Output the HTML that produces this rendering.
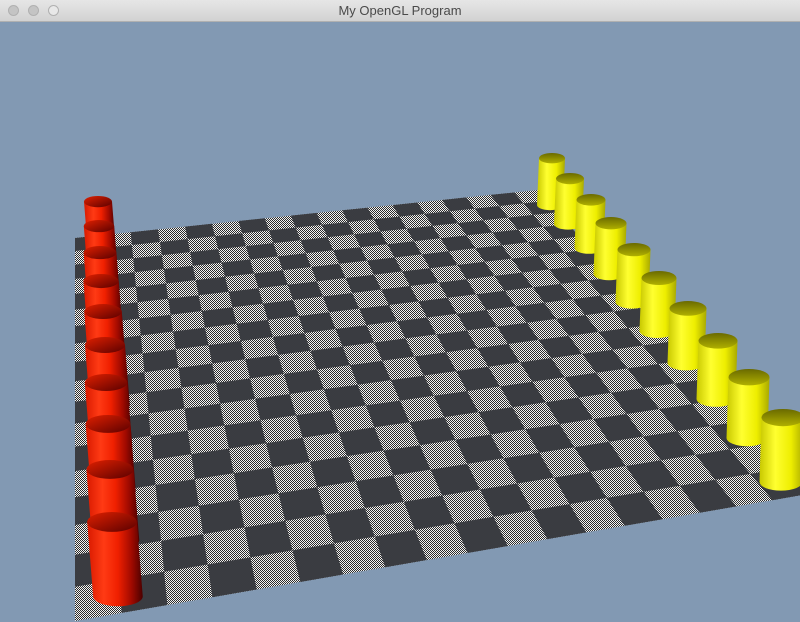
<!DOCTYPE html>
<html><head><meta charset="utf-8"><style>
html,body{margin:0;padding:0;width:800px;height:622px;overflow:hidden;background:#8299b3}
#tb{position:absolute;left:0;top:0;width:800px;height:21px;background:linear-gradient(#e6e6e6,#d2d2d2);border-bottom:1px solid #b0b0b0;font:13px "Liberation Sans",sans-serif;color:#4a4a4a;text-align:center;line-height:21px}
.dot{position:absolute;top:5px;width:11px;height:11px;border-radius:50%;background:#c4c4c4;border:1px solid #b0b0b0;box-sizing:border-box}
svg{position:absolute;left:0;top:0}
</style></head><body>
<svg id="s" width="800" height="622" xmlns="http://www.w3.org/2000/svg">
<defs>
<pattern id="dith" width="2" height="2" patternUnits="userSpaceOnUse"><rect width="2" height="2" fill="#f4f4f4"/><rect width="1" height="1" fill="#2a2a2a"/><rect x="1" y="1" width="1" height="1" fill="#2a2a2a"/></pattern>
<linearGradient id="rg" x1="0" x2="1" y1="0" y2="0"><stop offset="0" stop-color="#d81a00"/><stop offset="0.3" stop-color="#ff3a14"/><stop offset="0.55" stop-color="#f02000"/><stop offset="0.8" stop-color="#a00a00"/><stop offset="1" stop-color="#4a0000"/></linearGradient>
<linearGradient id="rc" x1="0" x2="1" y1="0" y2="1"><stop offset="0" stop-color="#e02000"/><stop offset="1" stop-color="#5a0000"/></linearGradient>
<linearGradient id="yg" x1="0" x2="1" y1="0" y2="0"><stop offset="0" stop-color="#c8c800"/><stop offset="0.35" stop-color="#ffff30"/><stop offset="0.7" stop-color="#eeee00"/><stop offset="1" stop-color="#a8a800"/></linearGradient>
<linearGradient id="yc" x1="0" x2="0" y1="0" y2="1"><stop offset="0" stop-color="#6a6a00"/><stop offset="1" stop-color="#b0b000"/></linearGradient>
</defs>
<g id="board"></g><g id="cyl"></g>
</svg>
<div id="tb"><div class="dot" style="left:8px"></div><div class="dot" style="left:28px"></div><div class="dot" style="left:48px;background:#e8e8e8"></div>My OpenGL Program</div>
<script>
var P=[[75,238],[538,190],[808,494],[75,621]];
var x0=P[0][0],y0=P[0][1],x1=P[1][0],y1=P[1][1],x2=P[2][0],y2=P[2][1],x3=P[3][0],y3=P[3][1];
var dx1=x1-x2,dx2=x3-x2,dy1=y1-y2,dy2=y3-y2,sx=x0-x1+x2-x3,sy=y0-y1+y2-y3;
var den=dx1*dy2-dx2*dy1;
var g=(sx*dy2-dx2*sy)/den,h=(dx1*sy-sx*dy1)/den;
var a=x1-x0+g*x1,b=x3-x0+h*x3,c=x0,d=y1-y0+g*y1,e=y3-y0+h*y3,f=y0;
function m(u,v){var w=g*u+h*v+1;return [(a*u+b*v+c)/w,(d*u+e*v+f)/w];}
var N=18,s='';
s+='<polygon points="'+P.map(function(p){return p.join(',')}).join(' ')+'" fill="url(#dith)"/>';
for(var i=0;i<N;i++)for(var j=0;j<N;j++){if((i+j)%2)continue;
var q=[m(i/N,j/N),m((i+1)/N,j/N),m((i+1)/N,(j+1)/N),m(i/N,(j+1)/N)];
s+='<polygon points="'+q.map(function(p){return p[0].toFixed(1)+','+p[1].toFixed(1)}).join(' ')+'" fill="#3a3c41"/>';}
document.getElementById('board').innerHTML=s;
function cyl(cx,yt,yb,w,dx,body,cap){var r=w/2,ry=w*0.2;
return '<path d="M'+(cx-r)+','+yt+' L'+(cx+dx-r)+','+yb+' A'+r+' '+ry+' 0 0 0 '+(cx+dx+r)+','+yb+' L'+(cx+r)+','+yt+' Z" fill="url(#'+body+')"/>'+
'<ellipse cx="'+cx+'" cy="'+yt+'" rx="'+r+'" ry="'+ry+'" fill="url(#'+cap+')"/>';}
var c2='';
var Y=[[552,153,205,26],[570,173,224,28],[591,194,248,29],[611,217,274,31],[634,243,302,33],[659,271,331,35],[688,301,363,37],[718,333,399,39],[749,369,438,41],[783,409,482,43]];
Y.forEach(function(t){c2+=cyl(t[0],t[1]+t[3]*0.2,t[2],t[3],-2,'yg','yc');});
var R=[[98,196],[99,220],[100,246],[101,274],[103,304],[105,337],[106,374],[108,415],[110,460],[112,512]];
R.forEach(function(t,k){var w=28+k*2.4,hh=w*1.7;c2+=cyl(t[0],t[1]+w*0.2,t[1]+hh,w,w*0.12,'rg','rc');});
document.getElementById('cyl').innerHTML=c2;
</script>
</body></html>
